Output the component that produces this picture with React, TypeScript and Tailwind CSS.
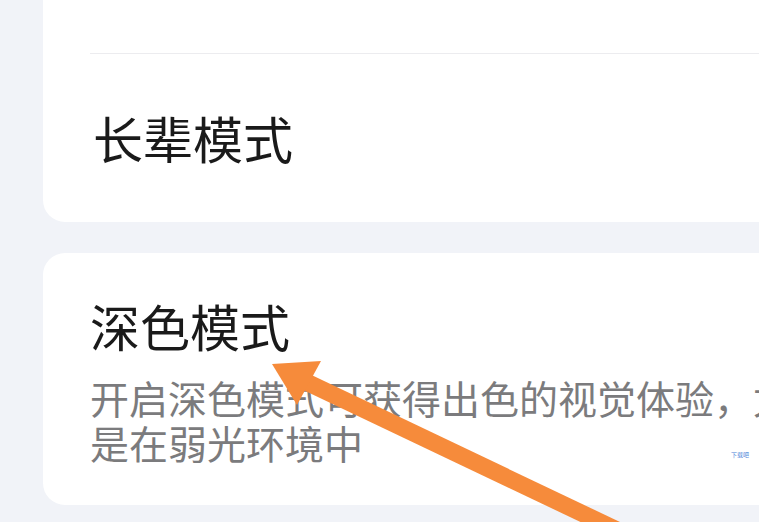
import React from "react";

export default function App() {
  const font = { fontFamily: '"Noto Sans CJK SC", "Noto Sans", sans-serif' };

  return (
    <div
      className="relative w-[759px] h-[522px] overflow-hidden bg-[#f1f3f8]"
      style={font}
    >
      <div className="flex flex-col gap-[31px] pl-[43px] -mr-[60px]">
        {/* Elder mode card */}
        <div className="-mt-[30px] h-[252px] bg-white rounded-[22px] flex flex-col">
          <div className="h-[84px] ml-[47px] border-b border-[#ececef]" />
          <div className="flex-1 flex items-center pl-[50px] pb-[2px]">
            <span className="text-[50px] leading-none text-[#1a1a1a]">
              长辈模式
            </span>
          </div>
        </div>

        {/* Dark mode card */}
        <div className="h-[252px] bg-white rounded-[22px] pl-[47px] pt-[42px]">
          <div className="text-[50px] leading-[60px] text-[#1a1a1a]">
            深色模式
          </div>
          <div className="mt-[20px] text-[39px] leading-[45px] text-[#7b7b7d] whitespace-nowrap">
            <div>开启深色模式可获得出色的视觉体验，尤其</div>
            <div>是在弱光环境中</div>
          </div>
        </div>
      </div>

      {/* watermark */}
      <span className="absolute left-[731px] top-[452px] text-[6px] leading-none text-[#4a7fd8]">
        下载吧
      </span>

      {/* orange annotation arrow */}
      <svg
        className="absolute inset-0 pointer-events-none"
        width="759"
        height="522"
        viewBox="0 0 759 522"
      >
        <line
          x1="300"
          y1="379"
          x2="680"
          y2="560"
          stroke="#f68b3b"
          strokeWidth="17"
        />
        <polygon points="272,364 321,361 297,405" fill="#f68b3b" />
      </svg>
    </div>
  );
}
